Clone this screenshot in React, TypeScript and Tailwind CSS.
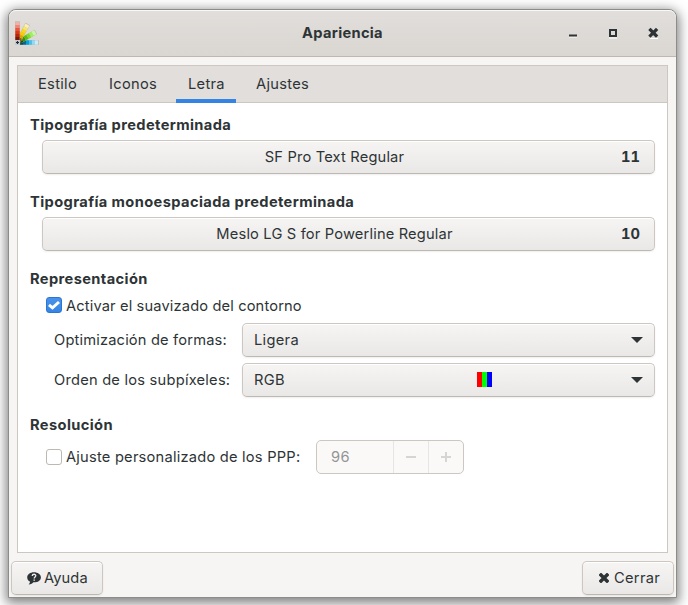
import type { ReactNode } from "react";

const raised =
  "border border-[#cdc7c2] border-b-[#bfb8b1] rounded-[5px] bg-gradient-to-b from-[#f6f5f4] to-[#eae8e6] shadow-[inset_0_1px_#ffffff,0_1px_2px_rgba(0,0,0,0.07)]";

function Cross() {
  return (
    <svg width="10" height="10" viewBox="0 0 10 10" className="shrink-0">
      <path d="M2 2 8 8M8 2 2 8" stroke="#2e3436" strokeWidth="3.5" strokeLinecap="square" />
    </svg>
  );
}

function AppIcon() {
  const fans = [
    { angle: 0, colors: ["#7b1708", "#b92405", "#dc3515", "#e8543b", "#ef8577", "#f1b0a8"] },
    { angle: 29, colors: ["#8a6500", "#dba800", "#f8cc00", "#fad61c", "#fbe468", "#fdf0ae"] },
    { angle: 60, colors: ["#1d4f05", "#3f8c08", "#5ebc10", "#7edb28", "#9df25c", "#c8f8a0"] },
    { angle: 90, colors: ["#03405e", "#05678f", "#04a0d8", "#4bbfea", "#93d9f3", "#c8ecf8"] },
  ];
  return (
    <svg width="24" height="24" viewBox="0 0 24 24">
      {[fans[3], fans[2], fans[1], fans[0]].map((f) => (
        <g key={f.angle} transform={`rotate(${f.angle} 2.5 21.5)`}>
          <rect x="0" y="0.3" width="5" height="19" fill="#b9bab6" />
          {f.colors.map((c, i) => (
            <rect key={c} x="0.3" y={16 - i * 3} width="4.4" height="3.05" fill={c} />
          ))}
        </g>
      ))}
      <rect x="0" y="19" width="5" height="5" fill="#c4cbd2" />
      <path d="M2.5 20v3M1 21.500h3" stroke="#222b33" strokeWidth="1.200" />
    </svg>
  );
}

function Tab({ label, className, active }: { label: string; className: string; active?: boolean }) {
  return (
    <div className={`pl-3 pt-[7px] tracking-[0.3px] ${className} ${active ? "relative z-10 h-[37px] border-b-4 border-[#3584e4]" : "h-[36px]"}`}>
      {label}
    </div>
  );
}

function Heading({ children }: { children: ReactNode }) {
  return <h2 className="h-[22px] font-bold tracking-[0.38px]">{children}</h2>;
}

function FontButton({ name, size }: { name: string; size: string }) {
  return (
    <button className={`ml-3 mt-1 flex h-[34px] w-[613px] items-center ${raised}`}>
      <span className="w-[583px] text-center">{name}</span>
      <span className="-ml-[5px] font-bold tabular-nums tracking-normal">{size}</span>
    </button>
  );
}

function Combo({ value, swatch }: { value: string; swatch?: boolean }) {
  return (
    <button className={`flex h-[34px] w-[413px] items-center pl-[11px] pr-[11px] ${raised}`}>
      <span className="w-[223px] text-left tracking-[0.3px]">{value}</span>
      {swatch && (
        <span className="-mt-px flex h-[15px] w-[15px]">
          <i className="w-[5px] bg-[#ff0000]" />
          <i className="w-[5px] bg-[#00ff00]" />
          <i className="w-[5px] bg-[#0000ff]" />
        </span>
      )}
      <svg className="ml-auto" width="12" height="6" viewBox="0 0 12 6">
        <path d="M0 0h12L6 6z" fill="#2e3436" />
      </svg>
    </button>
  );
}

export default function App() {
  return (
    <div className="h-[605px] w-[688px] overflow-hidden bg-white pl-2 pt-[9px] font-['Inter','Liberation_Sans',sans-serif] text-[14.67px] leading-[22px] tracking-[0.17px] text-[#2e3436] whitespace-nowrap">
      <div className="flex h-[589px] w-[669px] flex-col overflow-hidden rounded-t-[8px] border border-[#8c8c8b] bg-[#f6f5f4] shadow-[0_3px_12px_2px_rgba(0,0,0,0.5)]">
        <header className="flex h-[47px] shrink-0 items-center rounded-t-[7px] border-b border-[#bfb8b1] bg-gradient-to-b from-[#e1dedb] to-[#dad6d2] pl-[6px] shadow-[inset_0_1px_#f9f8f8]">
          <AppIcon />
          <h1 className="ml-[64px] w-[479px] text-center font-bold tracking-[0.3px]">Apariencia</h1>
          <svg className="ml-[-13px]" width="92" height="14" viewBox="0 0 92 14">
            <path d="M0 11h8M40 12h8M81 12.500h8" stroke="#fff" />
            <path d="M0 9.500h8" stroke="#2e3436" strokeWidth="2" />
            <path d="M41 4h6v6h-6z" stroke="#2e3436" strokeWidth="2" fill="none" />
            <path d="M81.500 4 87 9.500M87 4 81.500 9.500" stroke="#2e3436" strokeWidth="3.200" strokeLinecap="square" />
          </svg>
        </header>

        <main className="ml-2 mt-2 h-[488px] w-[651px] shrink-0 border border-[#cdc7c2] bg-white">
          <nav className="flex h-[37px] border-b border-[#cdc7c2] bg-[#e1dedb]">
            <Tab label="Estilo" className="ml-2 w-[71px]" />
            <Tab label="Iconos" className="w-[79px]" />
            <Tab label="Letra" className="w-[60px]" active />
            <Tab label="Ajustes" className="ml-2" />
          </nav>
          <section className="pl-3 pt-[11px]">
            <Heading>Tipografía predeterminada</Heading>
            <FontButton name="SF Pro Text Regular" size="11" />
          </section>
          <section className="pl-3 pt-[17px]">
            <Heading>Tipografía monoespaciada predeterminada</Heading>
            <FontButton name="Meslo LG S for Powerline Regular" size="10" />
          </section>
          <section className="pl-3 pt-[17px]">
            <Heading>Representación</Heading>
            <label className="ml-4 mt-[5px] flex h-[22px] items-center">
              <span className="-mt-[2px] flex h-4 w-4 items-center justify-center rounded-[3px] border border-[#2a76d2] bg-gradient-to-b from-[#4a92e9] to-[#3584e4]">
                <svg className="shrink-0" width="14" height="14" viewBox="0 0 14 14">
                  <path d="M2 6.800 5.500 9.800 12 4" fill="none" stroke="#fff" strokeWidth="3" />
                </svg>
              </span>
              <span className="ml-1 tracking-[0.14px]">Activar el suavizado del contorno</span>
            </label>
            <div className="mt-[6px] flex items-center">
              <span className="w-[212px] pl-6 tracking-[0.17px]">Optimización de formas:</span>
              <Combo value="Ligera" />
            </div>
            <div className="mt-[6px] flex items-center">
              <span className="w-[212px] pl-6 tracking-[0.23px]">Orden de los subpíxeles:</span>
              <Combo value="RGB" swatch />
            </div>
          </section>
          <section className="pl-3 pt-[17px]">
            <Heading>Resolución</Heading>
            <div className="ml-4 mt-1 flex h-[34px] items-center">
              <span className="h-4 w-4 rounded-[3px] border border-[#bfb8b1] bg-white" />
              <span className="ml-1 w-[250px] tracking-[0.22px]">Ajuste personalizado de los PPP:</span>
              <div className="flex h-[34px] w-[148px] rounded-[5px] border border-[#cdc7c2] bg-[#faf9f8] text-[#929595]">
                <span className="w-[76px] pl-[14px] pt-[5px] tracking-[0.5px]">96</span>
                <span className="flex w-[35px] items-center justify-center border-l border-[#e8e6e4]">
                  <svg width="10" height="10"><path d="M0 5h10" stroke="#d5d5d4" strokeWidth="2" /></svg>
                </span>
                <span className="flex w-[35px] items-center justify-center border-l border-[#e8e6e4]">
                  <svg width="10" height="10"><path d="M0 5h10M5 0v10" stroke="#d5d5d4" strokeWidth="2" /></svg>
                </span>
              </div>
            </div>
          </section>
        </main>

        <footer className="mt-2 flex h-[34px] shrink-0 justify-between px-[2px]">
          <button className={`flex w-[92px] items-center pl-[15px] ${raised}`}>
            <svg width="14" height="13" viewBox="0 0 14 13">
              <path d="M7 .3C3.200.3.200 2.500.200 5.400c0 1.900 1.100 3.300 2.800 4.200 0 1.200-.5 2.100-1.300 2.900 2.300-.1 3.900-1 4.700-2.200 4.300.2 7.500-1.800 7.500-4.900C13.900 2.500 10.800.3 7 .3z" fill="#2e3436" />
              <path d="M5.200 4c.1-2.400 3.800-2.200 3.600-.2C8.700 5 7.200 5 7.200 6.500" fill="none" stroke="#eee" strokeWidth="1.300" />
              <path d="M6.500 7.400h1.400v1.400H6.500z" fill="#eee" />
            </svg>
            <span className="ml-[3px] tracking-[0.1px]">Ayuda</span>
          </button>
          <button className={`flex w-[92px] items-center pl-[16px] ${raised}`}>
            <Cross />
            <span className="ml-[5px] tracking-[0.3px]">Cerrar</span>
          </button>
        </footer>
      </div>
    </div>
  );
}
